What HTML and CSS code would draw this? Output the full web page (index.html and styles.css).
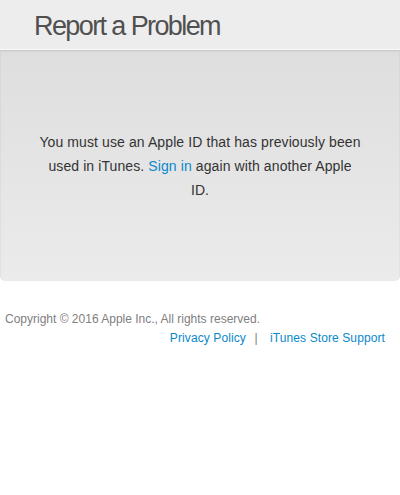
FILE: index.html
```html
<!DOCTYPE html>
<html>
<head>
<meta charset="utf-8">
<link rel="stylesheet" href="styles.css">
</head>
<body>
<div class="header">
  <h1 class="title">Report a Problem</h1>
</div>
<div class="panel">
  <p class="message">You must use an Apple ID that has previously been used in iTunes. <a class="link" href="#">Sign in</a> again with another Apple ID.</p>
</div>
<div class="footer">
  <div class="copyright">Copyright © 2016 Apple Inc., All rights reserved.</div>
  <div class="footer-links">
    <a class="link" href="#">Privacy Policy</a>
    <span class="sep">|</span>
    <a class="link" href="#">iTunes Store Support</a>
  </div>
</div>
</body>
</html>
```

FILE: styles.css
```css
html, body {
  margin: 0;
  padding: 0;
  background: #ffffff;
  font-family: "Liberation Sans", Arial, sans-serif;
}
.header {
  background: #ededed;
  border-bottom: 1px solid #fbfbfb;
  box-sizing: border-box;
  height: 50px;
  padding-left: 34px;
}
.title {
  margin: 0;
  font-weight: normal;
  font-size: 27px;
  letter-spacing: -1.6px;
  color: #505050;
  line-height: 50px;
  padding-top: 1px;
}
.panel {
  position: relative;
  height: 231px;
  background: linear-gradient(#dedede, #ebebeb);
  border-radius: 0 0 5px 5px;
  box-shadow: inset 0 1px 2px rgba(0,0,0,0.12);
  display: flex;
  align-items: center;
  justify-content: center;
}
.panel::after {
  content: "";
  position: absolute;
  left: 60px;
  right: 60px;
  bottom: 0;
  height: 10px;
  border-radius: 50%;
  box-shadow: 0 6px 8px rgba(0,0,0,0.06);
  z-index: -1;
}
.message {
  margin: 0;
  width: 322px;
  text-align: center;
  font-size: 14px;
  letter-spacing: 0.1px;
  line-height: 24px;
  color: #333333;
}
.link {
  color: #0a88cc;
  text-decoration: none;
}
.footer {
  padding: 29px 15px 0 5px;
  font-size: 12px;
  line-height: 19px;
}
.copyright {
  color: #808080;
}
.footer-links {
  text-align: right;
  letter-spacing: 0.1px;
}
.sep {
  color: #808080;
  margin: 0 9px 0 5px;
}
```
